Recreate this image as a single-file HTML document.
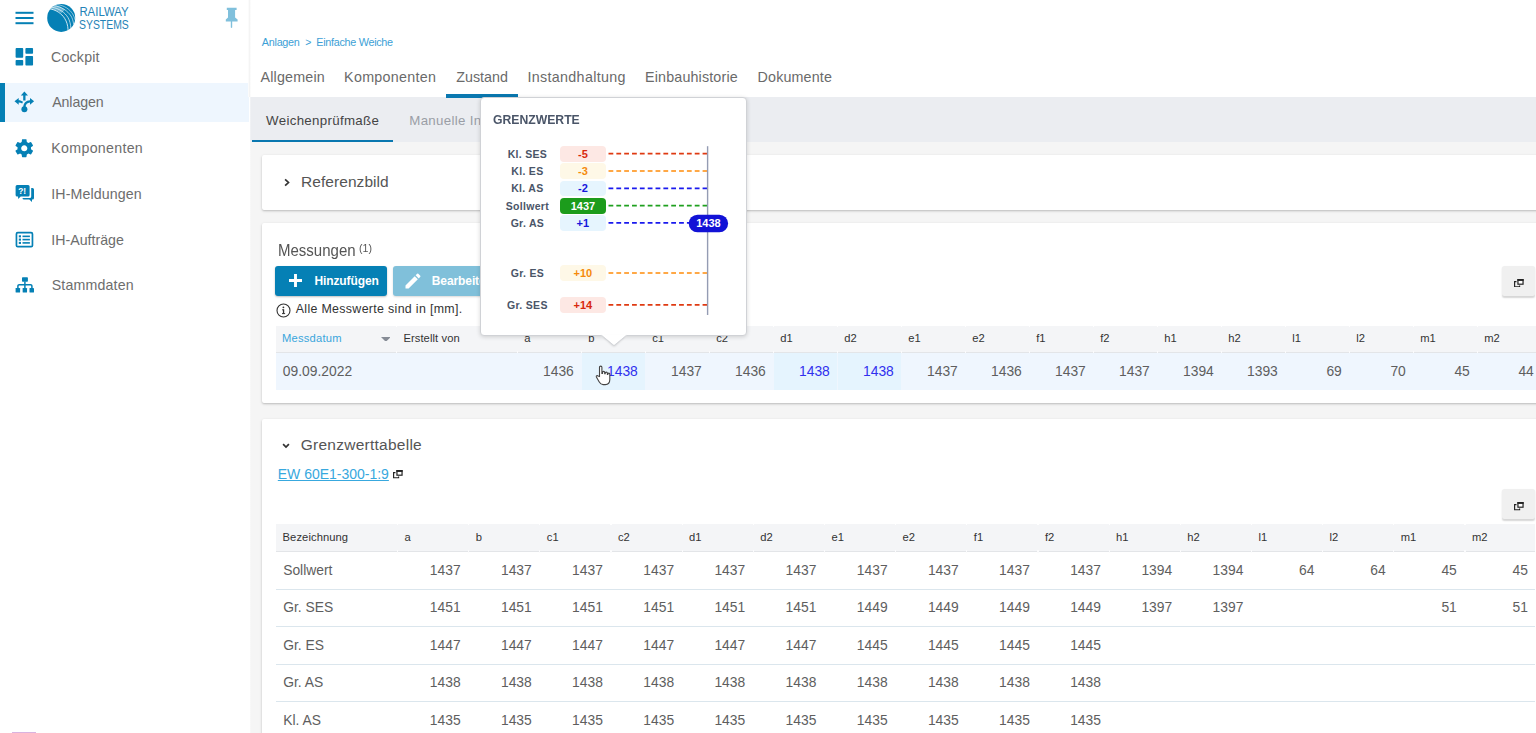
<!DOCTYPE html>
<html lang="de">
<head>
<meta charset="utf-8">
<title>Railway Systems</title>
<style>
*{box-sizing:border-box;margin:0;padding:0}
html,body{width:1536px;height:733px;overflow:hidden;background:#fff}
body{font-family:"Liberation Sans",sans-serif;position:relative;color:#333}
.abs{position:absolute}
.t{position:absolute;white-space:nowrap;line-height:1}
/* sidebar */
#side{position:absolute;left:0;top:0;width:249px;height:733px;background:#fff}
#side .nav{position:absolute;left:52px;font-size:14.2px;color:#6d6d6d;white-space:nowrap;line-height:1}
#side svg{position:absolute;overflow:visible}
#sel{position:absolute;left:0;top:83px;width:249px;height:39px;background:#eef6fe}
#selbar{position:absolute;left:0;top:83px;width:5px;height:39px;background:#0580b5}
/* main */
#main{position:absolute;left:250px;top:0;width:1286px;height:733px;background:#f5f5f5}
#top{position:absolute;left:0;top:0;width:1286px;height:97px;background:#fff}
#sub{position:absolute;left:0;top:97px;width:1286px;height:45px;background:#ebedf1}
.tab{position:absolute;top:69.5px;font-size:14.3px;color:#6a6a6a;white-space:nowrap;line-height:1}
.card{position:absolute;background:#fff;border-radius:2px;box-shadow:0 1px 3px rgba(0,0,0,.17),0 1px 1.500px rgba(0,0,0,.09)}
</style>
</head>
<body>
<!-- SIDEBAR -->
<div id="side">
  <div id="sel"></div><div id="selbar"></div>
  <!-- hamburger -->
  <svg style="left:15px;top:11px" width="19" height="14"><g fill="#0580b5"><rect x="0.5" y="0.8" width="18" height="2"/><rect x="0.5" y="6" width="18" height="2"/><rect x="0.5" y="11.2" width="18" height="2"/></g></svg>
  <!-- logo -->
  <svg id="logo" style="left:46px;top:3px" width="90" height="30" viewBox="46 3 90 30">
    <defs><clipPath id="lc"><circle cx="61.2" cy="17.9" r="14"/></clipPath></defs>
    <circle cx="61.2" cy="17.9" r="14" fill="#0580b5"/>
    <g clip-path="url(#lc)" fill="none" stroke="#fff" stroke-linecap="butt">
      <path d="M48.5 8.6 C56 9.6, 61.5 13.5, 64.6 18.3 C66.800 21.700, 67.800 25.300, 68.100 30" stroke-width="1" opacity=".8"/>
      <path d="M51.5 7.2 C59 8.2, 65 12.500, 68 17.6 C69.800 20.700, 70.600 24, 70.900 28.500" stroke-width="0.9" opacity=".75"/>
      <path d="M54 5.800 C61.500 6.700, 67.500 10.700, 71 16 C72.400 18.300, 73.200 21, 73.700 24.500" stroke-width="0.85" opacity=".7"/>
      <path d="M57.500 4.600 C64 5.500, 69.500 9, 72.600 13.800 C73.800 15.700, 74.600 17.700, 75.200 20.300" stroke-width="0.8" opacity=".65"/>
      <path d="M49 9 L55.500 4.800 C59 6, 62.500 7.600, 65 9.600 L61.500 13 C58 10.800, 53.500 9.400, 49 9Z" fill="#fff" stroke="none" opacity=".38"/>
    </g>
    <text x="79.4" y="16" font-family="Liberation Sans, sans-serif" font-size="12.1" fill="#2483b7" textLength="49.2" lengthAdjust="spacingAndGlyphs">RAILWAY</text>
    <text x="79" y="28.6" font-family="Liberation Sans, sans-serif" font-size="12.1" fill="#2483b7" textLength="49.8" lengthAdjust="spacingAndGlyphs">SYSTEMS</text>
  </svg>
  <!-- pin -->
  <svg style="left:225px;top:7px" width="14" height="22" viewBox="225 7 14 22"><path fill="#80c0dc" d="M226.8 7.8h9.8v2.2h-1.5v7.4l2.5 2v2h-5.4v6l-.7 .6 -.7 -.6v-6h-5v-2l2.2 -2v-7.4h-1.2z"/></svg>

  <!-- Cockpit -->
  <svg style="left:15px;top:48px" width="19" height="18" viewBox="15 48 19 18"><g fill="#0580b5"><rect x="15.600" y="48.100" width="7.600" height="9.600" rx=".8"/><rect x="25.400" y="48.100" width="7.650" height="5.650" rx=".8"/><rect x="15.600" y="59.900" width="7.600" height="5.600" rx=".8"/><rect x="25.400" y="56" width="7.650" height="9.500" rx=".8"/></g></svg>
  <div class="nav" style="left:51.07px;top:49.8px;letter-spacing:0.193px">Cockpit</div>
  <!-- Anlagen -->
  <svg style="left:14px;top:91px" width="21" height="22" viewBox="14 91 21 22"><g fill="#0580b5" stroke="none">
    <path d="M24.36 91.5 L28 95.6 L25.5 95.6 L25.5 100.6 L23.2 100.6 L23.2 95.6 L20.8 95.6Z"/>
    <path d="M14.5 101.3 L18.7 97.9 L18.7 100.2 C20.3 100.2 21.8 100.7 23 101.8 L22.2 103.6 C21.2 102.8 20 102.4 18.7 102.4 L18.7 104.7Z"/>
    <path d="M34.1 101.3 L30 97.9 L30 100.2 C26 100.3 23.3 103.2 23.3 107 L25.6 107 C25.6 104.3 27.3 102.5 30 102.4 L30 104.7Z"/>
    <circle cx="24.4" cy="109.3" r="3"/>
  </g></svg>
  <div class="nav" style="left:52.17px;top:95.2px;letter-spacing:-0.078px">Anlagen</div>
  <!-- Komponenten -->
  <svg style="left:12.95px;top:136.75px" width="22.5" height="22.5" viewBox="0 0 24 24"><path fill="#0580b5" d="M19.14,12.94c0.04-0.3,0.06-0.61,0.06-0.94c0-0.32-0.02-0.64-0.07-0.94l2.03-1.58c0.18-0.14,0.23-0.41,0.12-0.61 l-1.92-3.32c-0.12-0.22-0.37-0.29-0.59-0.22l-2.39,0.96c-0.5-0.38-1.03-0.7-1.62-0.94L14.4,2.81c-0.04-0.24-0.24-0.41-0.48-0.41 h-3.84c-0.24,0-0.43,0.17-0.47,0.41L9.25,5.35C8.66,5.59,8.12,5.92,7.63,6.29L5.24,5.33c-0.22-0.08-0.47,0-0.59,0.22L2.74,8.87 C2.62,9.08,2.66,9.34,2.86,9.48l2.03,1.58C4.84,11.36,4.8,11.69,4.8,12s0.02,0.64,0.07,0.94l-2.03,1.58 c-0.18,0.14-0.23,0.41-0.12,0.61l1.92,3.32c0.12,0.22,0.37,0.29,0.59,0.22l2.39-0.96c0.5,0.38,1.03,0.7,1.62,0.94l0.36,2.54 c0.05,0.24,0.24,0.41,0.48,0.41h3.84c0.24,0,0.44-0.17,0.47-0.41l0.36-2.54c0.59-0.24,1.13-0.56,1.62-0.94l2.39,0.96 c0.22,0.08,0.47,0,0.59-0.22l1.92-3.32c0.12-0.22,0.07-0.47-0.12-0.61L19.14,12.94z M12,15.3c-1.82,0-3.3-1.48-3.3-3.3 s1.48-3.3,3.3-3.3s3.3,1.48,3.3,3.3S13.82,15.3,12,15.300z"/></svg>
  <div class="nav" style="left:51.35px;top:140.8px;letter-spacing:0.307px">Komponenten</div>
  <!-- IH-Meldungen -->
  <svg style="left:15px;top:184px" width="20" height="19" viewBox="15 184 20 19"><g fill="#0580b5">
    <path d="M17.1 185.1h11a1.5 1.5 0 0 1 1.5 1.5v8.5a1.5 1.5 0 0 1-1.5 1.5h-7.4l-2.6 2.4v-2.4h-1a1.5 1.5 0 0 1-1.5-1.500v-8.500a1.5 1.5 0 0 1 1.5-1.5z"/>
    <path d="M31.2 188h1.300a1.500 1.500 0 0 1 1.500 1.500v8.500a1.500 1.500 0 0 1-1.500 1.500h-.5v2.400l-2.700-2.400h-5.300a1.500 1.500 0 0 1-1.500-1.500h7.200a1.500 1.500 0 0 0 1.500-1.500z"/>
    </g>
    <text x="18.2" y="194.2" font-family="Liberation Sans, sans-serif" font-weight="bold" font-size="8.4" fill="#fff">?!</text>
  </svg>
  <div class="nav" style="left:51.24px;top:186.800px;letter-spacing:0.114px">IH-Meldungen</div>
  <!-- IH-Auftraege -->
  <svg style="left:15px;top:231px" width="19" height="17" viewBox="15 231 19 17"><rect x="16.45" y="232.650" width="16" height="14.050" rx="1.3" fill="none" stroke="#0580b5" stroke-width="1.700"/><g fill="#0580b5"><rect x="18.800" y="235.300" width="2.200" height="2.100"/><rect x="18.800" y="238.550" width="2.200" height="2.100"/><rect x="18.800" y="241.850" width="2.200" height="2.100"/><rect x="22.500" y="235.550" width="7.400" height="1.600"/><rect x="22.500" y="238.800" width="7.400" height="1.600"/><rect x="22.500" y="242.100" width="7.400" height="1.600"/></g></svg>
  <div class="nav" style="left:51.24px;top:232.6px;letter-spacing:0.006px">IH-Aufträge</div>
  <!-- Stammdaten -->
  <svg style="left:15px;top:277px" width="20" height="16" viewBox="15 277 20 16"><g fill="#0580b5"><rect x="22" y="277.300" width="5.900" height="4.500" rx=".7"/><rect x="15.600" y="287.900" width="4.500" height="4.700" rx=".7"/><rect x="22.650" y="287.900" width="4.400" height="4.700" rx=".7"/><rect x="29.500" y="287.900" width="4.500" height="4.700" rx=".7"/></g><path d="M24.900 281.500v6.500M17.900 288v-2a1.300 1.300 0 0 1 1.300-1.300h11.400a1.300 1.300 0 0 1 1.300 1.300v2" fill="none" stroke="#0580b5" stroke-width="1.500"/></svg>
  <div class="nav" style="left:51.73px;top:277.800px;letter-spacing:0.168px">Stammdaten</div>
  <div class="abs" style="left:12px;top:732px;width:24px;height:2px;background:#d9b3e0"></div>
</div>

<!-- MAIN -->
<div id="main">
  <div id="top"></div>
  <div id="sub"></div>
  <div class="abs" style="left:-1.200px;top:0;width:2.400px;height:733px;background:linear-gradient(90deg,#fff,rgba(255,255,255,0))"></div>
  <div class="t" style="left:11.82px;top:37.200px;font-size:10.800px;color:#3c9fd6;letter-spacing:-0.263px">Anlagen</div>
  <div class="t" style="left:55.200px;top:37.050px;font-size:10.500px;color:#3c9fd6">&gt;</div>
  <div class="t" style="left:66.29px;top:37.200px;font-size:10.800px;color:#3c9fd6;letter-spacing:-0.287px">Einfache Weiche</div>
  <div class="tab" style="left:10.48px;letter-spacing:0.181px">Allgemein</div>
  <div class="tab" style="left:94.05px;letter-spacing:0.298px">Komponenten</div>
  <div class="tab" style="left:206.34px;letter-spacing:-0.023px">Zustand</div>
  <div class="tab" style="left:277.45px;letter-spacing:0.325px">Instandhaltung</div>
  <div class="tab" style="left:395.05px;letter-spacing:0.156px">Einbauhistorie</div>
  <div class="tab" style="left:507.55px;letter-spacing:0.155px">Dokumente</div>
  <div class="abs" style="left:196px;top:93.500px;width:72.300px;height:4px;background:#0a78b0"></div>
  <div class="t" style="left:16.11px;top:113.740px;font-size:13.300px;color:#444;letter-spacing:0.311px">Weichenprüfmaße</div>
  <div class="t" style="left:159.300px;top:113.900px;font-size:13.300px;color:#9a9ea6;letter-spacing:0.300px">Manuelle In</div>
  <div class="abs" style="left:2px;top:139.500px;width:140.500px;height:2.500px;background:#0a78b0"></div>
  <!--CARDS-->
  <div class="card" style="left:12px;top:155px;width:1290px;height:55px"></div>
  <svg class="abs" style="left:33px;top:178px" width="8" height="9" viewBox="0 0 8 9"><path d="M2.100 1.300L5.500 4.500L2.100 7.700" fill="none" stroke="#333" stroke-width="1.700"/></svg>
  <div class="t" style="left:51.1px;top:173.500px;font-size:15.500px;color:#555;letter-spacing:0.050px">Referenzbild</div>
  <div class="card" style="left:12px;top:223px;width:1290px;height:180px"></div>
  <div class="t" style="left:27.700px;top:242.100px;font-size:16.300px;color:#555;transform:scaleX(.922);transform-origin:0 0">Messungen</div>
  <div class="t" style="left:109.300px;top:242.700px;font-size:11px;color:#555;transform:scaleX(.96);transform-origin:0 0">(1)</div>
  <div class="abs" style="left:25px;top:266px;width:111.700px;height:30px;background:#0580b5;border-radius:3px;box-shadow:0 1px 2px rgba(0,0,0,.25)"></div>
  <svg class="abs" style="left:38.600px;top:274px" width="13" height="13" viewBox="0 0 13 13"><path d="M6.500 0v13M0 6.500h13" stroke="#fff" stroke-width="2.900" fill="none"/></svg>
  <div class="t" style="left:64.4px;top:274.500px;font-size:12px;font-weight:bold;color:#fff;letter-spacing:-0.100px">Hinzufügen</div>
  <div class="abs" style="left:143.400px;top:266px;width:120px;height:30px;background:#80c0da;border-radius:3px;box-shadow:0 1px 2px rgba(0,0,0,.15)"></div>
  <svg class="abs" style="left:152.800px;top:270.600px" width="20" height="20" viewBox="0 0 24 24"><path fill="#fff" d="M3 17.250V21h3.750L17.810 9.940l-3.750-3.750L3 17.250zM20.710 7.040a1 1 0 0 0 0-1.410l-2.340-2.340a1 1 0 0 0-1.410 0l-1.830 1.830 3.750 3.750 1.830-1.830z"/></svg>
  <div class="t" style="left:181.800px;top:274.500px;font-size:12px;font-weight:bold;color:#fff;letter-spacing:-0.100px">Bearbeiten</div>
  <div class="abs" style="left:1252px;top:265.9px;width:32.700px;height:30px;background:#f0f0f0;border-radius:2.500px;box-shadow:0 1.500px 1.500px rgba(0,0,0,.16)"></div>
  <svg class="abs" style="left:1264.3px;top:278.9px" width="10" height="8.500" viewBox="0 0 10 8.500"><path d="M0.600 2.600h1.900M0.600 2.100v5.600h5v-1.300" fill="none" stroke="#222" stroke-width="1.150"/><rect x="3.950" y="0.700" width="5.100" height="4.500" fill="#fff" stroke="#222" stroke-width="1.200"/><rect x="3.400" y="0" width="6.200" height="1.900" fill="#222"/></svg>
  <svg class="abs" style="left:25.800px;top:302.500px" width="15" height="15" viewBox="0 0 15 15"><circle cx="7.500" cy="7.500" r="6.500" fill="none" stroke="#333" stroke-width="1.100"/><rect x="6.900" y="6.300" width="1.300" height="4.400" fill="#333"/><rect x="6.100" y="6.300" width="1.500" height="1" fill="#333"/><rect x="6" y="10.100" width="3.100" height="1" fill="#333"/><circle cx="7.400" cy="4.300" r=".9" fill="#333"/></svg>
  <div class="t" style="left:45.75px;top:303.100px;font-size:12.400px;color:#333;letter-spacing:0.324px">Alle Messwerte sind in [mm].</div>
  <div class="abs" style="left:25.500px;top:326px;width:1270px;height:26.500px;background:#f4f5f7;border-bottom:1px solid #e3e5e8"></div>
  <div class="t" style="left:32.07px;top:333px;font-size:11.200px;color:#3aa5dc;letter-spacing:0.198px">Messdatum</div>
  <svg class="abs" style="left:130.700px;top:336.600px" width="9.700" height="4.900" viewBox="0 0 10 5"><path d="M0 0h10L5 5z" fill="#868c96"/></svg>
  <div class="t" style="left:153.39px;top:333px;font-size:11.200px;color:#333;letter-spacing:0.089px">Erstellt von</div>
  <div class="abs" style="left:25.500px;top:352.500px;width:1270px;height:37.300px;background:#eff6fe"></div>
  <div class="t" style="left:274.2px;top:333px;font-size:11.200px;color:#333">a</div>
  <div class="t" style="left:267.3px;top:364.500px;width:56.5px;text-align:right;font-size:13.850px;color:#5e5e5e">1436</div>
  <div class="abs" style="left:331.8px;top:352.500px;width:63.400px;height:37.300px;background:#e5f4fe"></div>
  <div class="t" style="left:338.2px;top:333px;font-size:11.200px;color:#333">b</div>
  <div class="t" style="left:331.3px;top:364.500px;width:56.5px;text-align:right;font-size:13.850px;color:#3030ee">1438</div>
  <div class="t" style="left:402.2px;top:333px;font-size:11.200px;color:#333">c1</div>
  <div class="t" style="left:395.3px;top:364.500px;width:56.5px;text-align:right;font-size:13.850px;color:#5e5e5e">1437</div>
  <div class="t" style="left:466.2px;top:333px;font-size:11.200px;color:#333">c2</div>
  <div class="t" style="left:459.3px;top:364.500px;width:56.5px;text-align:right;font-size:13.850px;color:#5e5e5e">1436</div>
  <div class="abs" style="left:523.8px;top:352.500px;width:63.400px;height:37.300px;background:#e5f4fe"></div>
  <div class="t" style="left:530.2px;top:333px;font-size:11.200px;color:#333">d1</div>
  <div class="t" style="left:523.3px;top:364.500px;width:56.5px;text-align:right;font-size:13.850px;color:#3030ee">1438</div>
  <div class="abs" style="left:587.8px;top:352.500px;width:63.400px;height:37.300px;background:#e5f4fe"></div>
  <div class="t" style="left:594.2px;top:333px;font-size:11.200px;color:#333">d2</div>
  <div class="t" style="left:587.3px;top:364.500px;width:56.5px;text-align:right;font-size:13.850px;color:#3030ee">1438</div>
  <div class="t" style="left:658.2px;top:333px;font-size:11.200px;color:#333">e1</div>
  <div class="t" style="left:651.3px;top:364.500px;width:56.5px;text-align:right;font-size:13.850px;color:#5e5e5e">1437</div>
  <div class="t" style="left:722.2px;top:333px;font-size:11.200px;color:#333">e2</div>
  <div class="t" style="left:715.3px;top:364.500px;width:56.5px;text-align:right;font-size:13.850px;color:#5e5e5e">1436</div>
  <div class="t" style="left:786.2px;top:333px;font-size:11.200px;color:#333">f1</div>
  <div class="t" style="left:779.3px;top:364.500px;width:56.5px;text-align:right;font-size:13.850px;color:#5e5e5e">1437</div>
  <div class="t" style="left:850.2px;top:333px;font-size:11.200px;color:#333">f2</div>
  <div class="t" style="left:843.3px;top:364.500px;width:56.5px;text-align:right;font-size:13.850px;color:#5e5e5e">1437</div>
  <div class="t" style="left:914.2px;top:333px;font-size:11.200px;color:#333">h1</div>
  <div class="t" style="left:907.3px;top:364.500px;width:56.5px;text-align:right;font-size:13.850px;color:#5e5e5e">1394</div>
  <div class="t" style="left:978.2px;top:333px;font-size:11.200px;color:#333">h2</div>
  <div class="t" style="left:971.3px;top:364.500px;width:56.5px;text-align:right;font-size:13.850px;color:#5e5e5e">1393</div>
  <div class="t" style="left:1042.2px;top:333px;font-size:11.200px;color:#333">l1</div>
  <div class="t" style="left:1035.3px;top:364.500px;width:56.5px;text-align:right;font-size:13.850px;color:#5e5e5e">69</div>
  <div class="t" style="left:1106.2px;top:333px;font-size:11.200px;color:#333">l2</div>
  <div class="t" style="left:1099.3px;top:364.500px;width:56.5px;text-align:right;font-size:13.850px;color:#5e5e5e">70</div>
  <div class="t" style="left:1170.2px;top:333px;font-size:11.200px;color:#333">m1</div>
  <div class="t" style="left:1163.3px;top:364.500px;width:56.5px;text-align:right;font-size:13.850px;color:#5e5e5e">45</div>
  <div class="t" style="left:1234.2px;top:333px;font-size:11.200px;color:#333">m2</div>
  <div class="t" style="left:1227.3px;top:364.500px;width:56.5px;text-align:right;font-size:13.850px;color:#5e5e5e">44</div>
  <div class="t" style="left:32.800px;top:364.500px;font-size:13.850px;color:#5e5e5e">09.09.2022</div>
  <svg class="abs" style="left:345px;top:365px" width="16" height="21" viewBox="0 0 16 21"><path d="M4.500 11.500V2.300a1.200 1.200 0 0 1 2.400 0v6.200h.6v-1a1.100 1.100 0 0 1 2.200 0v1.300h.5v-.6a1.100 1.100 0 0 1 2.200 0v1.200h.4v-.3a1 1 0 0 1 2 0v5.500c0 3-1.800 5-4.500 5h-2.200c-1.800 0-3-1-4-2.800l-2.700-4.800c-.5-1 .8-1.900 1.700-1z" fill="#fff" stroke="#444" stroke-width="1.100"/></svg>
  <div class="card" style="left:12px;top:419px;width:1290px;height:330px"></div>
  <svg class="abs" style="left:32.400px;top:442.900px" width="8" height="6" viewBox="0 0 8 6"><path d="M1.100 1.200L4 4.100L6.900 1.200" fill="none" stroke="#333" stroke-width="1.700"/></svg>
  <div class="t" style="left:50.70px;top:436.800px;font-size:15.500px;color:#555;letter-spacing:0.259px">Grenzwerttabelle</div>
  <div class="t" style="left:27.80px;top:467.200px;font-size:14px;color:#38a8de;text-decoration:underline;letter-spacing:-0.013px">EW 60E1-300-1:9</div>
  <svg class="abs" style="left:143.1px;top:470.3px" width="10" height="8.500" viewBox="0 0 10 8.500"><path d="M0.600 2.600h1.900M0.600 2.100v5.600h5v-1.300" fill="none" stroke="#222" stroke-width="1.150"/><rect x="3.950" y="0.700" width="5.100" height="4.500" fill="#fff" stroke="#222" stroke-width="1.200"/><rect x="3.400" y="0" width="6.200" height="1.900" fill="#222"/></svg>
  <div class="abs" style="left:1252px;top:489.4px;width:32.700px;height:30px;background:#f0f0f0;border-radius:2.500px;box-shadow:0 1.500px 1.500px rgba(0,0,0,.16)"></div>
  <svg class="abs" style="left:1264.3px;top:502.4px" width="10" height="8.500" viewBox="0 0 10 8.500"><path d="M0.600 2.600h1.900M0.600 2.100v5.600h5v-1.300" fill="none" stroke="#222" stroke-width="1.150"/><rect x="3.950" y="0.700" width="5.100" height="4.500" fill="#fff" stroke="#222" stroke-width="1.200"/><rect x="3.400" y="0" width="6.200" height="1.900" fill="#222"/></svg>
  <div class="abs" style="left:25.500px;top:523.700px;width:1259px;height:28.300px;background:#f4f5f7;border-bottom:1px solid #e3e5e8"></div>
  <div class="t" style="left:32.59px;top:532px;font-size:11.200px;color:#333;letter-spacing:0.081px">Bezeichnung</div>
  <div class="t" style="left:154.5px;top:532px;font-size:11.200px;color:#333">a</div>
  <div class="t" style="left:225.7px;top:532px;font-size:11.200px;color:#333">b</div>
  <div class="t" style="left:296.8px;top:532px;font-size:11.200px;color:#333">c1</div>
  <div class="t" style="left:368.0px;top:532px;font-size:11.200px;color:#333">c2</div>
  <div class="t" style="left:439.1px;top:532px;font-size:11.200px;color:#333">d1</div>
  <div class="t" style="left:510.3px;top:532px;font-size:11.200px;color:#333">d2</div>
  <div class="t" style="left:581.5px;top:532px;font-size:11.200px;color:#333">e1</div>
  <div class="t" style="left:652.6px;top:532px;font-size:11.200px;color:#333">e2</div>
  <div class="t" style="left:723.8px;top:532px;font-size:11.200px;color:#333">f1</div>
  <div class="t" style="left:794.9px;top:532px;font-size:11.200px;color:#333">f2</div>
  <div class="t" style="left:866.1px;top:532px;font-size:11.200px;color:#333">h1</div>
  <div class="t" style="left:937.3px;top:532px;font-size:11.200px;color:#333">h2</div>
  <div class="t" style="left:1008.4px;top:532px;font-size:11.200px;color:#333">l1</div>
  <div class="t" style="left:1079.6px;top:532px;font-size:11.200px;color:#333">l2</div>
  <div class="t" style="left:1150.7px;top:532px;font-size:11.200px;color:#333">m1</div>
  <div class="t" style="left:1221.9px;top:532px;font-size:11.200px;color:#333">m2</div>
  <div class="t" style="left:33.200px;top:564.0px;font-size:13.850px;color:#5e5e5e">Sollwert</div>
  <div class="t" style="left:147.0px;top:564.0px;width:63.600px;text-align:right;font-size:13.850px;color:#5e5e5e">1437</div>
  <div class="t" style="left:218.2px;top:564.0px;width:63.600px;text-align:right;font-size:13.850px;color:#5e5e5e">1437</div>
  <div class="t" style="left:289.3px;top:564.0px;width:63.600px;text-align:right;font-size:13.850px;color:#5e5e5e">1437</div>
  <div class="t" style="left:360.5px;top:564.0px;width:63.600px;text-align:right;font-size:13.850px;color:#5e5e5e">1437</div>
  <div class="t" style="left:431.6px;top:564.0px;width:63.600px;text-align:right;font-size:13.850px;color:#5e5e5e">1437</div>
  <div class="t" style="left:502.8px;top:564.0px;width:63.600px;text-align:right;font-size:13.850px;color:#5e5e5e">1437</div>
  <div class="t" style="left:574.0px;top:564.0px;width:63.600px;text-align:right;font-size:13.850px;color:#5e5e5e">1437</div>
  <div class="t" style="left:645.1px;top:564.0px;width:63.600px;text-align:right;font-size:13.850px;color:#5e5e5e">1437</div>
  <div class="t" style="left:716.3px;top:564.0px;width:63.600px;text-align:right;font-size:13.850px;color:#5e5e5e">1437</div>
  <div class="t" style="left:787.4px;top:564.0px;width:63.600px;text-align:right;font-size:13.850px;color:#5e5e5e">1437</div>
  <div class="t" style="left:858.6px;top:564.0px;width:63.600px;text-align:right;font-size:13.850px;color:#5e5e5e">1394</div>
  <div class="t" style="left:929.8px;top:564.0px;width:63.600px;text-align:right;font-size:13.850px;color:#5e5e5e">1394</div>
  <div class="t" style="left:1000.9px;top:564.0px;width:63.600px;text-align:right;font-size:13.850px;color:#5e5e5e">64</div>
  <div class="t" style="left:1072.1px;top:564.0px;width:63.600px;text-align:right;font-size:13.850px;color:#5e5e5e">64</div>
  <div class="t" style="left:1143.2px;top:564.0px;width:63.600px;text-align:right;font-size:13.850px;color:#5e5e5e">45</div>
  <div class="t" style="left:1214.4px;top:564.0px;width:63.600px;text-align:right;font-size:13.850px;color:#5e5e5e">45</div>
  <div class="abs" style="left:25.500px;top:588.8px;width:1259px;height:1px;background:#dbe6ed"></div>
  <div class="t" style="left:33.200px;top:601.4px;font-size:13.850px;color:#5e5e5e">Gr. SES</div>
  <div class="t" style="left:147.0px;top:601.4px;width:63.600px;text-align:right;font-size:13.850px;color:#5e5e5e">1451</div>
  <div class="t" style="left:218.2px;top:601.4px;width:63.600px;text-align:right;font-size:13.850px;color:#5e5e5e">1451</div>
  <div class="t" style="left:289.3px;top:601.4px;width:63.600px;text-align:right;font-size:13.850px;color:#5e5e5e">1451</div>
  <div class="t" style="left:360.5px;top:601.4px;width:63.600px;text-align:right;font-size:13.850px;color:#5e5e5e">1451</div>
  <div class="t" style="left:431.6px;top:601.4px;width:63.600px;text-align:right;font-size:13.850px;color:#5e5e5e">1451</div>
  <div class="t" style="left:502.8px;top:601.4px;width:63.600px;text-align:right;font-size:13.850px;color:#5e5e5e">1451</div>
  <div class="t" style="left:574.0px;top:601.4px;width:63.600px;text-align:right;font-size:13.850px;color:#5e5e5e">1449</div>
  <div class="t" style="left:645.1px;top:601.4px;width:63.600px;text-align:right;font-size:13.850px;color:#5e5e5e">1449</div>
  <div class="t" style="left:716.3px;top:601.4px;width:63.600px;text-align:right;font-size:13.850px;color:#5e5e5e">1449</div>
  <div class="t" style="left:787.4px;top:601.4px;width:63.600px;text-align:right;font-size:13.850px;color:#5e5e5e">1449</div>
  <div class="t" style="left:858.6px;top:601.4px;width:63.600px;text-align:right;font-size:13.850px;color:#5e5e5e">1397</div>
  <div class="t" style="left:929.8px;top:601.4px;width:63.600px;text-align:right;font-size:13.850px;color:#5e5e5e">1397</div>
  <div class="t" style="left:1143.2px;top:601.4px;width:63.600px;text-align:right;font-size:13.850px;color:#5e5e5e">51</div>
  <div class="t" style="left:1214.4px;top:601.4px;width:63.600px;text-align:right;font-size:13.850px;color:#5e5e5e">51</div>
  <div class="abs" style="left:25.500px;top:626.2px;width:1259px;height:1px;background:#dbe6ed"></div>
  <div class="t" style="left:33.200px;top:638.8px;font-size:13.850px;color:#5e5e5e">Gr. ES</div>
  <div class="t" style="left:147.0px;top:638.8px;width:63.600px;text-align:right;font-size:13.850px;color:#5e5e5e">1447</div>
  <div class="t" style="left:218.2px;top:638.8px;width:63.600px;text-align:right;font-size:13.850px;color:#5e5e5e">1447</div>
  <div class="t" style="left:289.3px;top:638.8px;width:63.600px;text-align:right;font-size:13.850px;color:#5e5e5e">1447</div>
  <div class="t" style="left:360.5px;top:638.8px;width:63.600px;text-align:right;font-size:13.850px;color:#5e5e5e">1447</div>
  <div class="t" style="left:431.6px;top:638.8px;width:63.600px;text-align:right;font-size:13.850px;color:#5e5e5e">1447</div>
  <div class="t" style="left:502.8px;top:638.8px;width:63.600px;text-align:right;font-size:13.850px;color:#5e5e5e">1447</div>
  <div class="t" style="left:574.0px;top:638.8px;width:63.600px;text-align:right;font-size:13.850px;color:#5e5e5e">1445</div>
  <div class="t" style="left:645.1px;top:638.8px;width:63.600px;text-align:right;font-size:13.850px;color:#5e5e5e">1445</div>
  <div class="t" style="left:716.3px;top:638.8px;width:63.600px;text-align:right;font-size:13.850px;color:#5e5e5e">1445</div>
  <div class="t" style="left:787.4px;top:638.8px;width:63.600px;text-align:right;font-size:13.850px;color:#5e5e5e">1445</div>
  <div class="abs" style="left:25.500px;top:663.6px;width:1259px;height:1px;background:#dbe6ed"></div>
  <div class="t" style="left:33.200px;top:676.2px;font-size:13.850px;color:#5e5e5e">Gr. AS</div>
  <div class="t" style="left:147.0px;top:676.2px;width:63.600px;text-align:right;font-size:13.850px;color:#5e5e5e">1438</div>
  <div class="t" style="left:218.2px;top:676.2px;width:63.600px;text-align:right;font-size:13.850px;color:#5e5e5e">1438</div>
  <div class="t" style="left:289.3px;top:676.2px;width:63.600px;text-align:right;font-size:13.850px;color:#5e5e5e">1438</div>
  <div class="t" style="left:360.5px;top:676.2px;width:63.600px;text-align:right;font-size:13.850px;color:#5e5e5e">1438</div>
  <div class="t" style="left:431.6px;top:676.2px;width:63.600px;text-align:right;font-size:13.850px;color:#5e5e5e">1438</div>
  <div class="t" style="left:502.8px;top:676.2px;width:63.600px;text-align:right;font-size:13.850px;color:#5e5e5e">1438</div>
  <div class="t" style="left:574.0px;top:676.2px;width:63.600px;text-align:right;font-size:13.850px;color:#5e5e5e">1438</div>
  <div class="t" style="left:645.1px;top:676.2px;width:63.600px;text-align:right;font-size:13.850px;color:#5e5e5e">1438</div>
  <div class="t" style="left:716.3px;top:676.2px;width:63.600px;text-align:right;font-size:13.850px;color:#5e5e5e">1438</div>
  <div class="t" style="left:787.4px;top:676.2px;width:63.600px;text-align:right;font-size:13.850px;color:#5e5e5e">1438</div>
  <div class="abs" style="left:25.500px;top:701.0px;width:1259px;height:1px;background:#dbe6ed"></div>
  <div class="t" style="left:33.200px;top:713.6px;font-size:13.850px;color:#5e5e5e">Kl. AS</div>
  <div class="t" style="left:147.0px;top:713.6px;width:63.600px;text-align:right;font-size:13.850px;color:#5e5e5e">1435</div>
  <div class="t" style="left:218.2px;top:713.6px;width:63.600px;text-align:right;font-size:13.850px;color:#5e5e5e">1435</div>
  <div class="t" style="left:289.3px;top:713.6px;width:63.600px;text-align:right;font-size:13.850px;color:#5e5e5e">1435</div>
  <div class="t" style="left:360.5px;top:713.6px;width:63.600px;text-align:right;font-size:13.850px;color:#5e5e5e">1435</div>
  <div class="t" style="left:431.6px;top:713.6px;width:63.600px;text-align:right;font-size:13.850px;color:#5e5e5e">1435</div>
  <div class="t" style="left:502.8px;top:713.6px;width:63.600px;text-align:right;font-size:13.850px;color:#5e5e5e">1435</div>
  <div class="t" style="left:574.0px;top:713.6px;width:63.600px;text-align:right;font-size:13.850px;color:#5e5e5e">1435</div>
  <div class="t" style="left:645.1px;top:713.6px;width:63.600px;text-align:right;font-size:13.850px;color:#5e5e5e">1435</div>
  <div class="t" style="left:716.3px;top:713.6px;width:63.600px;text-align:right;font-size:13.850px;color:#5e5e5e">1435</div>
  <div class="t" style="left:787.4px;top:713.6px;width:63.600px;text-align:right;font-size:13.850px;color:#5e5e5e">1435</div>
  <div class="abs" style="left:25.500px;top:738.4px;width:1259px;height:1px;background:#dbe6ed"></div>
  <div class="abs" style="left:145.8px;top:350.800px;width:1.300px;height:2.500px;background:#fbfbfc"></div>
  <div class="abs" style="left:145.8px;top:325.700px;width:1.300px;height:1.300px;background:#fff"></div>
  <div class="abs" style="left:266.9px;top:350.800px;width:1.300px;height:2.500px;background:#fbfbfc"></div>
  <div class="abs" style="left:266.9px;top:325.700px;width:1.300px;height:1.300px;background:#fff"></div>
  <div class="abs" style="left:330.9px;top:350.800px;width:1.300px;height:2.500px;background:#fbfbfc"></div>
  <div class="abs" style="left:330.9px;top:325.700px;width:1.300px;height:1.300px;background:#fff"></div>
  <div class="abs" style="left:394.9px;top:350.800px;width:1.300px;height:2.500px;background:#fbfbfc"></div>
  <div class="abs" style="left:394.9px;top:325.700px;width:1.300px;height:1.300px;background:#fff"></div>
  <div class="abs" style="left:458.9px;top:350.800px;width:1.300px;height:2.500px;background:#fbfbfc"></div>
  <div class="abs" style="left:458.9px;top:325.700px;width:1.300px;height:1.300px;background:#fff"></div>
  <div class="abs" style="left:522.9px;top:350.800px;width:1.300px;height:2.500px;background:#fbfbfc"></div>
  <div class="abs" style="left:522.9px;top:325.700px;width:1.300px;height:1.300px;background:#fff"></div>
  <div class="abs" style="left:586.9px;top:350.800px;width:1.300px;height:2.500px;background:#fbfbfc"></div>
  <div class="abs" style="left:586.9px;top:325.700px;width:1.300px;height:1.300px;background:#fff"></div>
  <div class="abs" style="left:650.9px;top:350.800px;width:1.300px;height:2.500px;background:#fbfbfc"></div>
  <div class="abs" style="left:650.9px;top:325.700px;width:1.300px;height:1.300px;background:#fff"></div>
  <div class="abs" style="left:714.9px;top:350.800px;width:1.300px;height:2.500px;background:#fbfbfc"></div>
  <div class="abs" style="left:714.9px;top:325.700px;width:1.300px;height:1.300px;background:#fff"></div>
  <div class="abs" style="left:778.9px;top:350.800px;width:1.300px;height:2.500px;background:#fbfbfc"></div>
  <div class="abs" style="left:778.9px;top:325.700px;width:1.300px;height:1.300px;background:#fff"></div>
  <div class="abs" style="left:842.9px;top:350.800px;width:1.300px;height:2.500px;background:#fbfbfc"></div>
  <div class="abs" style="left:842.9px;top:325.700px;width:1.300px;height:1.300px;background:#fff"></div>
  <div class="abs" style="left:906.9px;top:350.800px;width:1.300px;height:2.500px;background:#fbfbfc"></div>
  <div class="abs" style="left:906.9px;top:325.700px;width:1.300px;height:1.300px;background:#fff"></div>
  <div class="abs" style="left:970.9px;top:350.800px;width:1.300px;height:2.500px;background:#fbfbfc"></div>
  <div class="abs" style="left:970.9px;top:325.700px;width:1.300px;height:1.300px;background:#fff"></div>
  <div class="abs" style="left:1034.9px;top:350.800px;width:1.300px;height:2.500px;background:#fbfbfc"></div>
  <div class="abs" style="left:1034.9px;top:325.700px;width:1.300px;height:1.300px;background:#fff"></div>
  <div class="abs" style="left:1098.9px;top:350.800px;width:1.300px;height:2.500px;background:#fbfbfc"></div>
  <div class="abs" style="left:1098.9px;top:325.700px;width:1.300px;height:1.300px;background:#fff"></div>
  <div class="abs" style="left:1162.9px;top:350.800px;width:1.300px;height:2.500px;background:#fbfbfc"></div>
  <div class="abs" style="left:1162.9px;top:325.700px;width:1.300px;height:1.300px;background:#fff"></div>
  <div class="abs" style="left:1226.9px;top:350.800px;width:1.300px;height:2.500px;background:#fbfbfc"></div>
  <div class="abs" style="left:1226.9px;top:325.700px;width:1.300px;height:1.300px;background:#fff"></div>
  <div class="abs" style="left:146.9px;top:550px;width:1.300px;height:2.500px;background:#fbfbfc"></div>
  <div class="abs" style="left:146.9px;top:523.700px;width:1.300px;height:1.300px;background:#fff"></div>
  <div class="abs" style="left:218.1px;top:550px;width:1.300px;height:2.500px;background:#fbfbfc"></div>
  <div class="abs" style="left:218.1px;top:523.700px;width:1.300px;height:1.300px;background:#fff"></div>
  <div class="abs" style="left:289.2px;top:550px;width:1.300px;height:2.500px;background:#fbfbfc"></div>
  <div class="abs" style="left:289.2px;top:523.700px;width:1.300px;height:1.300px;background:#fff"></div>
  <div class="abs" style="left:360.4px;top:550px;width:1.300px;height:2.500px;background:#fbfbfc"></div>
  <div class="abs" style="left:360.4px;top:523.700px;width:1.300px;height:1.300px;background:#fff"></div>
  <div class="abs" style="left:431.5px;top:550px;width:1.300px;height:2.500px;background:#fbfbfc"></div>
  <div class="abs" style="left:431.5px;top:523.700px;width:1.300px;height:1.300px;background:#fff"></div>
  <div class="abs" style="left:502.7px;top:550px;width:1.300px;height:2.500px;background:#fbfbfc"></div>
  <div class="abs" style="left:502.7px;top:523.700px;width:1.300px;height:1.300px;background:#fff"></div>
  <div class="abs" style="left:573.9px;top:550px;width:1.300px;height:2.500px;background:#fbfbfc"></div>
  <div class="abs" style="left:573.9px;top:523.700px;width:1.300px;height:1.300px;background:#fff"></div>
  <div class="abs" style="left:645.0px;top:550px;width:1.300px;height:2.500px;background:#fbfbfc"></div>
  <div class="abs" style="left:645.0px;top:523.700px;width:1.300px;height:1.300px;background:#fff"></div>
  <div class="abs" style="left:716.2px;top:550px;width:1.300px;height:2.500px;background:#fbfbfc"></div>
  <div class="abs" style="left:716.2px;top:523.700px;width:1.300px;height:1.300px;background:#fff"></div>
  <div class="abs" style="left:787.3px;top:550px;width:1.300px;height:2.500px;background:#fbfbfc"></div>
  <div class="abs" style="left:787.3px;top:523.700px;width:1.300px;height:1.300px;background:#fff"></div>
  <div class="abs" style="left:858.5px;top:550px;width:1.300px;height:2.500px;background:#fbfbfc"></div>
  <div class="abs" style="left:858.5px;top:523.700px;width:1.300px;height:1.300px;background:#fff"></div>
  <div class="abs" style="left:929.7px;top:550px;width:1.300px;height:2.500px;background:#fbfbfc"></div>
  <div class="abs" style="left:929.7px;top:523.700px;width:1.300px;height:1.300px;background:#fff"></div>
  <div class="abs" style="left:1000.8px;top:550px;width:1.300px;height:2.500px;background:#fbfbfc"></div>
  <div class="abs" style="left:1000.8px;top:523.700px;width:1.300px;height:1.300px;background:#fff"></div>
  <div class="abs" style="left:1072.0px;top:550px;width:1.300px;height:2.500px;background:#fbfbfc"></div>
  <div class="abs" style="left:1072.0px;top:523.700px;width:1.300px;height:1.300px;background:#fff"></div>
  <div class="abs" style="left:1143.1px;top:550px;width:1.300px;height:2.500px;background:#fbfbfc"></div>
  <div class="abs" style="left:1143.1px;top:523.700px;width:1.300px;height:1.300px;background:#fff"></div>
  <div class="abs" style="left:1214.3px;top:550px;width:1.300px;height:2.500px;background:#fbfbfc"></div>
  <div class="abs" style="left:1214.3px;top:523.700px;width:1.300px;height:1.300px;background:#fff"></div>
  <!--/CARDS-->
</div>
<div class="abs" style="left:248px;top:0;width:3px;height:97px;background:linear-gradient(90deg,#fff,#f4f4f4 50%,#fff)"></div>
<!--POPUP-->
<div id="pop" class="abs" style="left:480px;top:97px;width:267px;height:239px;background:#fff;border:1px solid #d0d2d6;border-radius:4px;box-shadow:0 1px 4px rgba(0,0,0,.16)"></div>
<svg class="abs" style="left:596px;top:334px;overflow:visible" width="36" height="14" viewBox="596 334 36 14"><defs><filter id="sh" x="-30%" y="-30%" width="160%" height="190%"><feGaussianBlur stdDeviation="1.1"/></filter></defs><path d="M603 336.500L614 346.600L625 336.500Z" fill="rgba(0,0,0,.22)" filter="url(#sh)"/><path d="M601.500 334.500h25v.700L614 345.600L601.500 335.200Z" fill="#fff"/><path d="M601.800 335.500L614 345.600L626.200 335.500" fill="none" stroke="#d3d5d9" stroke-width=".9"/></svg>
<div class="t" style="left:493.400px;top:113.400px;font-size:13px;font-weight:bold;color:#4a5568;transform:scaleX(.938);transform-origin:0 0">GRENZWERTE</div>
<div class="t" style="left:497.400px;top:148.6px;width:60px;text-align:center;font-size:10.500px;font-weight:bold;color:#4a5568;letter-spacing:0.300px">Kl. SES</div>
<div class="abs" style="left:559.700px;top:145.8px;width:46.400px;height:15.900px;border-radius:4px;background:#fde8e4"></div>
<div class="t" style="left:559.700px;top:148.6px;width:46.400px;text-align:center;font-size:11px;font-weight:bold;color:#d8280c">-5</div>
<div class="t" style="left:497.400px;top:165.9px;width:60px;text-align:center;font-size:10.500px;font-weight:bold;color:#4a5568;letter-spacing:0.300px">Kl. ES</div>
<div class="abs" style="left:559.700px;top:163.1px;width:46.400px;height:15.900px;border-radius:4px;background:#fef8e7"></div>
<div class="t" style="left:559.700px;top:165.9px;width:46.400px;text-align:center;font-size:11px;font-weight:bold;color:#f58a0b">-3</div>
<div class="t" style="left:497.400px;top:183.3px;width:60px;text-align:center;font-size:10.500px;font-weight:bold;color:#4a5568;letter-spacing:0.300px">Kl. AS</div>
<div class="abs" style="left:559.700px;top:180.5px;width:46.400px;height:15.900px;border-radius:4px;background:#e6f5fe"></div>
<div class="t" style="left:559.700px;top:183.3px;width:46.400px;text-align:center;font-size:11px;font-weight:bold;color:#1616dc">-2</div>
<div class="t" style="left:497.400px;top:200.5px;width:60px;text-align:center;font-size:10.500px;font-weight:bold;color:#4a5568;letter-spacing:0.300px">Sollwert</div>
<div class="abs" style="left:559.700px;top:197.7px;width:46.400px;height:15.900px;border-radius:4px;background:#1c9c1c"></div>
<div class="t" style="left:559.700px;top:200.5px;width:46.400px;text-align:center;font-size:11px;font-weight:bold;color:#fff">1437</div>
<div class="t" style="left:497.400px;top:217.7px;width:60px;text-align:center;font-size:10.500px;font-weight:bold;color:#4a5568;letter-spacing:0.300px">Gr. AS</div>
<div class="abs" style="left:559.700px;top:214.9px;width:46.400px;height:15.900px;border-radius:4px;background:#e6f5fe"></div>
<div class="t" style="left:559.700px;top:217.7px;width:46.400px;text-align:center;font-size:11px;font-weight:bold;color:#1616dc">+1</div>
<div class="t" style="left:497.400px;top:267.9px;width:60px;text-align:center;font-size:10.500px;font-weight:bold;color:#4a5568;letter-spacing:0.300px">Gr. ES</div>
<div class="abs" style="left:559.700px;top:265.1px;width:46.400px;height:15.900px;border-radius:4px;background:#fef8e7"></div>
<div class="t" style="left:559.700px;top:267.9px;width:46.400px;text-align:center;font-size:11px;font-weight:bold;color:#f58a0b">+10</div>
<div class="t" style="left:497.400px;top:299.8px;width:60px;text-align:center;font-size:10.500px;font-weight:bold;color:#4a5568;letter-spacing:0.300px">Gr. SES</div>
<div class="abs" style="left:559.700px;top:297.0px;width:46.400px;height:15.900px;border-radius:4px;background:#fde8e4"></div>
<div class="t" style="left:559.700px;top:299.8px;width:46.400px;text-align:center;font-size:11px;font-weight:bold;color:#d8280c">+14</div>
<svg class="abs" style="left:600px;top:140px;overflow:visible" width="140" height="180" viewBox="600 140 140 180"><line x1="608.500" y1="153.7" x2="707.2" y2="153.7" stroke="#df3a12" stroke-width="1.700" stroke-dasharray="4.800 3.040"/><line x1="608.500" y1="171.0" x2="707.2" y2="171.0" stroke="#ff8c0a" stroke-width="1.700" stroke-dasharray="4.800 3.040"/><line x1="608.500" y1="188.4" x2="707.2" y2="188.4" stroke="#1a1aee" stroke-width="1.700" stroke-dasharray="4.800 3.040"/><line x1="608.500" y1="205.6" x2="707.2" y2="205.6" stroke="#1fa01f" stroke-width="1.700" stroke-dasharray="4.800 3.040"/><line x1="608.500" y1="222.8" x2="690" y2="222.8" stroke="#1a1aee" stroke-width="1.700" stroke-dasharray="4.800 3.040"/><line x1="608.500" y1="273.0" x2="707.2" y2="273.0" stroke="#ff8c0a" stroke-width="1.700" stroke-dasharray="4.800 3.040"/><line x1="608.500" y1="304.9" x2="707.2" y2="304.9" stroke="#df3a12" stroke-width="1.700" stroke-dasharray="4.800 3.040"/><line x1="707.600" y1="146.200" x2="707.600" y2="315" stroke="#949cb3" stroke-width="1.400"/><rect x="688.700" y="214.700" width="39.400" height="17.600" rx="8.800" fill="#1212d6"/></svg>
<div class="t" style="left:688.700px;top:218.300px;width:39.400px;text-align:center;font-size:11px;font-weight:bold;color:#fff">1438</div>
<!--/POPUP-->
</body>
</html>
